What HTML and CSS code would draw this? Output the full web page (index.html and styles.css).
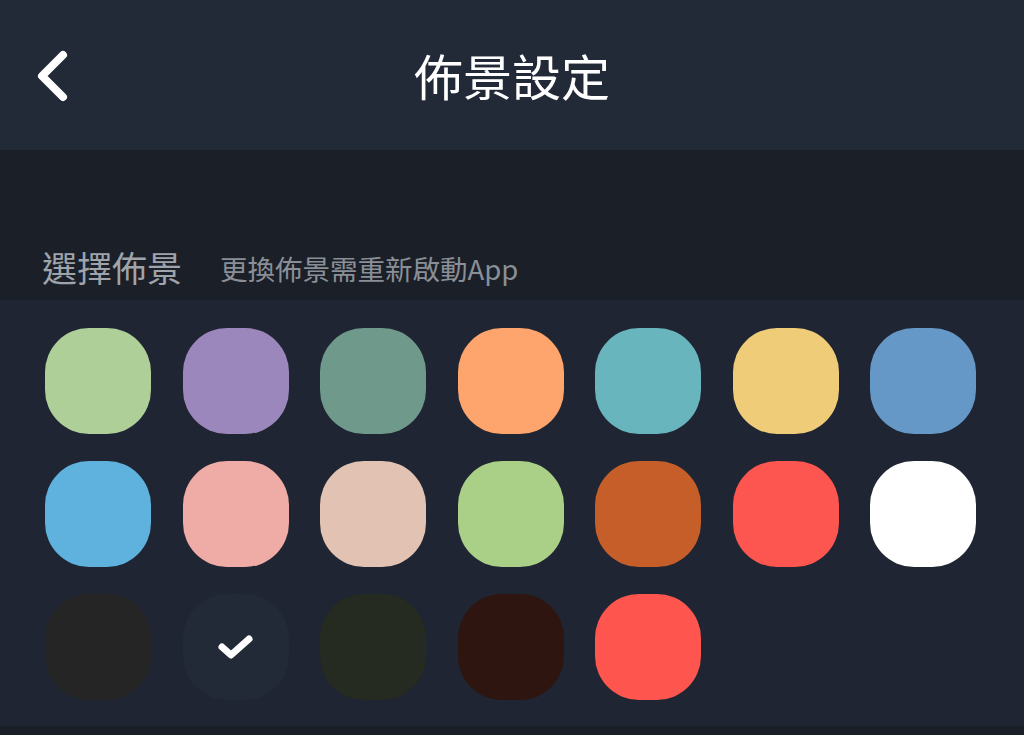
FILE: index.html
```html
<!DOCTYPE html>
<html lang="zh-Hant">
<head>
    <meta charset="UTF-8">
    <meta name="viewport" content="width=device-width, initial-scale=1.0">
    <title>佈景設定</title>
    <link rel="stylesheet" href="styles.css">
</head>
<body>
    <div class="header">
        <button class="back" aria-label="返回">
            <svg width="36" height="52" viewBox="0 0 36 52">
                <path d="M29 5 L8 26 L29 47" fill="none" stroke="#fff" stroke-width="8" stroke-linecap="round" stroke-linejoin="round"/>
            </svg>
        </button>
        <h1>佈景設定</h1>
    </div>

    <div class="section-head">
        <span class="section-title">選擇佈景</span>
        <span class="section-note">更換佈景需重新啟動App</span>
    </div>

    <div class="swatches">
        <div class="swatch" style="background:#aecf98"></div>
        <div class="swatch" style="background:#9b87bb"></div>
        <div class="swatch" style="background:#6e998b"></div>
        <div class="swatch" style="background:#fea46d"></div>
        <div class="swatch" style="background:#69b5bd"></div>
        <div class="swatch" style="background:#efcd78"></div>
        <div class="swatch" style="background:#6598c6"></div>

        <div class="swatch" style="background:#5eb2dd"></div>
        <div class="swatch" style="background:#efaba6"></div>
        <div class="swatch" style="background:#e2c3b3"></div>
        <div class="swatch" style="background:#a9d086"></div>
        <div class="swatch" style="background:#c55e29"></div>
        <div class="swatch" style="background:#fd5550"></div>
        <div class="swatch" style="background:#ffffff"></div>

        <div class="swatch" style="background:#252525"></div>
        <div class="swatch selected" style="background:#232a37">
            <svg width="40" height="32" viewBox="0 0 40 32">
                <path d="M6 16 L15 24 L33 8" fill="none" stroke="#fff" stroke-width="7" stroke-linecap="round" stroke-linejoin="round"/>
            </svg>
        </div>
        <div class="swatch" style="background:#252b20"></div>
        <div class="swatch" style="background:#2f150f"></div>
        <div class="swatch" style="background:#fe564e"></div>
    </div>

    <div class="footer-strip"></div>
</body>
</html>
```

FILE: styles.css
```css
body {
    margin: 0;
    background: #1a1f28;
    font-family: "Noto Sans CJK TC", "Noto Sans", sans-serif;
    color: #fff;
}
.header {
    height: 150px;
    background: #222937;
    display: flex;
    align-items: center;
    justify-content: center;
    position: relative;
}
.header h1 {
    margin: 0;
    font-size: 49px;
    font-weight: 400;
    margin-top: -2px;
}
.back {
    position: absolute;
    left: 34px;
    top: 50px;
    background: none;
    border: none;
    padding: 0;
    cursor: pointer;
}
.section-head {
    height: 150px;
    box-sizing: border-box;
    background: #1a1f28;
    display: flex;
    align-items: flex-end;
    padding: 0 0 16px 42px;
    gap: 38px;
}
.section-title {
    font-size: 35px;
    color: #9fa3aa;
    line-height: 1;
}
.section-note {
    font-size: 27.5px;
    color: #8a8f97;
    line-height: 1;
    margin-bottom: 2px;
}
.swatches {
    background: #1f2532;
    display: grid;
    grid-template-columns: repeat(7, 106px);
    column-gap: 31.5px;
    row-gap: 27px;
    padding: 28px 0 26px 45px;
}
.swatch {
    width: 106px;
    height: 106px;
    border-radius: 44px;
    display: flex;
    align-items: center;
    justify-content: center;
}
.footer-strip {
    height: 20px;
    background: #1a1e26;
}
```
